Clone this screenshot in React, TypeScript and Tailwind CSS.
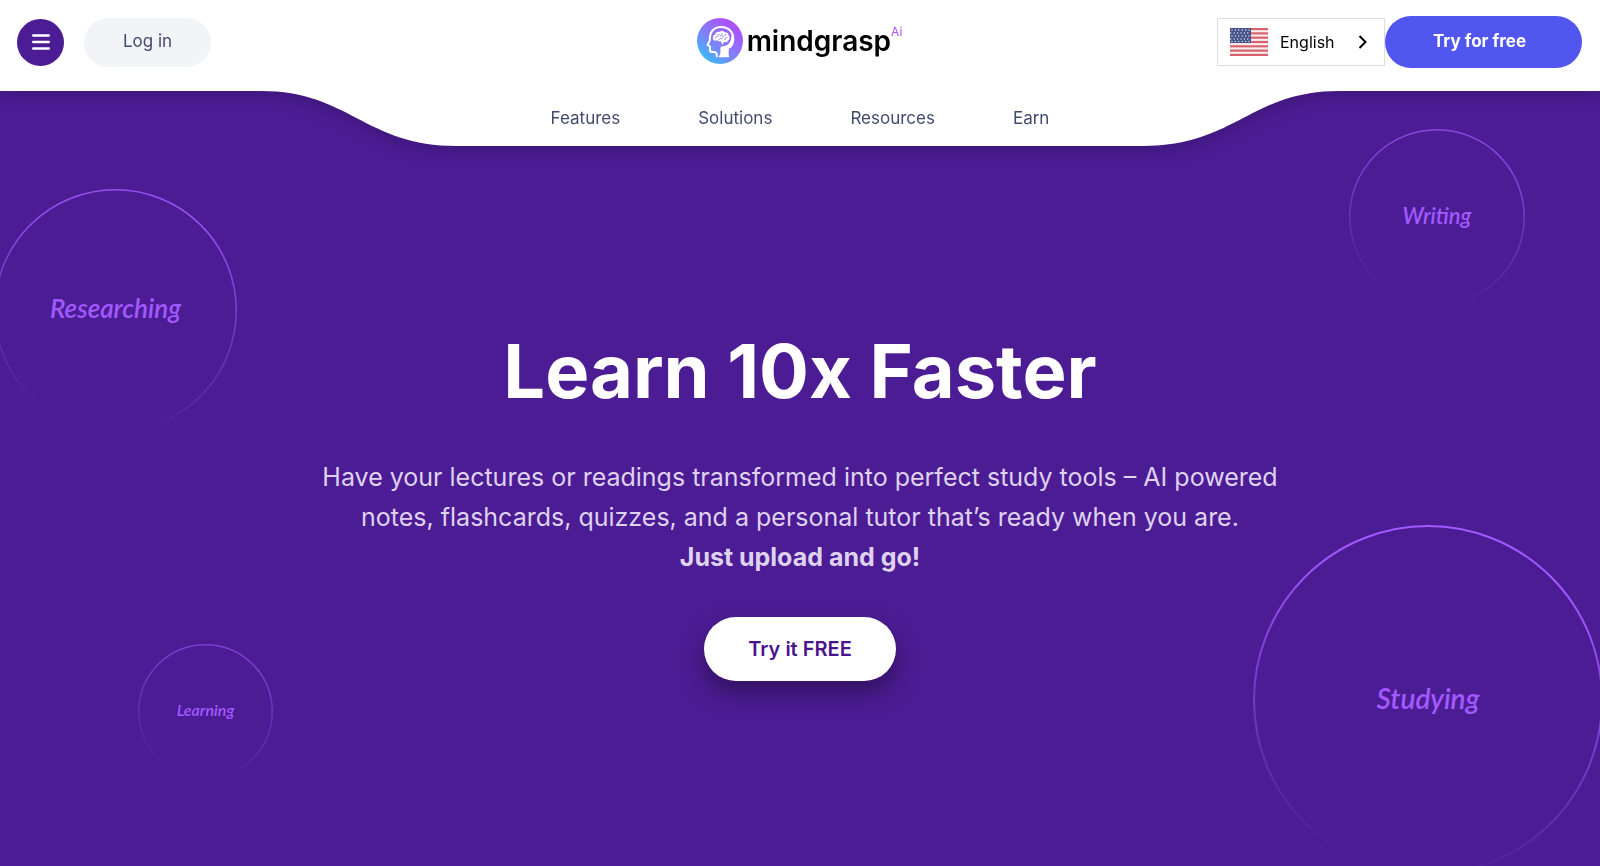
import { useId, useState } from "react";
import { clsx } from "clsx";

interface BubbleProps {
  label: string;
  size: number;
  strokeWidth: number;
  opacity: number;
  className: string;
  textClassName: string;
}

const navItems = ["Features", "Solutions", "Resources", "Earn"];

const stripes = [0, 2, 4, 6, 8, 10, 12];

function Flag() {
  return (
    <svg viewBox="0 0 38 28" className="h-7 w-[38px] shrink-0" aria-hidden="true">
      <rect width="38" height="28" fill="#f6eef0" />
      {stripes.map((row) => (
        <rect key={row} y={(row * 28) / 13} width="38" height={28 / 13} fill="#d8616b" />
      ))}
      <rect width="21" height="15" fill="#46548a" />
      {[2, 5, 8, 11, 13.5].map((y, row) =>
        [2, 5.4, 8.8, 12.2, 15.6, 19].map((x) => (
          <circle key={`${x}-${y}`} cx={row % 2 ? x - 1.2 : x} cy={y} r="0.7" fill="#dfe4f2" />
        ))
      )}
    </svg>
  );
}

function LogoMark() {
  return (
    <svg viewBox="0 0 46 46" className="size-[46px] shrink-0" aria-hidden="true">
      <defs>
        <linearGradient id="logo-fill" x1="0.1" y1="0.95" x2="0.8" y2="0.1">
          <stop offset="0" stopColor="#2fc4fa" />
          <stop offset="0.45" stopColor="#7f82f8" />
          <stop offset="1" stopColor="#b04dfd" />
        </linearGradient>
      </defs>
      <circle cx="23" cy="23" r="23" fill="url(#logo-fill)" />
      {/* head outline */}
      <path
        d="M19.800 38.300c.2-2.800-.6-4.300-2.600-4.300h-2.200c-1.500 0-2-.7-2-2.200v-3.300l-2.500-1.600 2.300-4.500C12.300 14 17 8.900 24 8.900c7.400 0 12.300 5 12.300 12 0 3.300-1.100 5.900-3.200 8.300"
        fill="none"
        stroke="#fff"
        strokeWidth="2"
        strokeLinejoin="round"
        strokeLinecap="round"
      />
      {/* neck */}
      <path
        d="M34.800 14.500c3 5 1.800 10.600-1.600 14-1.900 1.800-1.800 5.500-1.200 10.800H21.200c2-1.900 2.500-4.700 2.200-8-.2-1.700.2-2.500 1.800-2.700 4.600-.6 8.400-3.400 8.900-7.900z"
        fill="#fff"
      />
      {/* brain */}
      <path
        d="M16.300 21.800c-1-2.200-.2-4.400 1.700-5.200.6-2.200 2.600-3.300 4.400-2.700 1.600-1.300 4.200-1.200 5.400.3 2.200-.1 3.800 1.300 3.900 3.300 1.500 1.500 1.200 4-.5 5-.6 1.700-2.600 2.200-4.100 1.300l-1.600 3.200-1.400-3.600c-1.500.5-3 .1-3.600-1.200-1.500.7-3.200.6-4.200-.4z"
        fill="#fff"
      />
      <path
        d="M18.200 20.200c.4-1.600 1.600-2.200 3-1.700M20.700 16.500c1.400-.4 2.500.3 2.700 1.500M24.800 15.600c-.6 1.700.2 2.900 1.800 3M22 21.800c.6-1.600 2.200-2 3.500-1.200M28 21.900c-.4-1.400.4-2.500 1.800-2.500M28.600 16.300l-.6 1.300"
        fill="none"
        stroke="#8a7bfa"
        strokeWidth="0.900"
        strokeLinecap="round"
      />
    </svg>
  );
}

function NotchCurve({ flipped = false }: { flipped?: boolean }) {
  return (
    <svg
      viewBox="0 0 196 55"
      className={clsx("h-[55px] w-[196px] shrink-0", flipped ? "-ml-px -scale-x-100" : "-mr-px")}
      aria-hidden="true"
    >
      <path d="M0 0C88 0 104 55 196 55V0Z" fill="#fff" />
    </svg>
  );
}

function Bubble({ label, size, strokeWidth, opacity, className, textClassName }: BubbleProps) {
  const id = useId();

  return (
    <div className={clsx("absolute flex items-center justify-center pb-1", className)}>
      <svg
        viewBox={`0 0 ${size} ${size}`}
        className="absolute inset-0 size-full"
        aria-hidden="true"
      >
        <defs>
          <linearGradient id={id} x1="0.6" y1="0" x2="0.4" y2="1">
            <stop offset="0.1" stopColor="#a259ff" />
            <stop offset="0.6" stopColor="#a259ff" stopOpacity="0.45" />
            <stop offset="0.98" stopColor="#a259ff" stopOpacity="0" />
          </linearGradient>
        </defs>
        <circle
          cx={size / 2}
          cy={size / 2}
          r={(size - strokeWidth) / 2}
          fill="none"
          stroke={`url(#${id})`}
          strokeWidth={strokeWidth}
          opacity={opacity}
        />
      </svg>
      <span
        className={clsx(
          "relative font-['Lato','Open_Sans',cursive] italic font-semibold text-[#a259ff]",
          textClassName
        )}
      >
        {label}
      </span>
    </div>
  );
}

function Header() {
  const [language, setLanguage] = useState("en");

  return (
    <header className="relative z-10 drop-shadow-[0_4px_8px_rgba(0,0,0,0.2)]">
      <div className="grid h-[91px] grid-cols-[1fr_auto_1fr] items-start bg-white pt-4 pr-[18px] pl-[17px]">
        <div className="flex h-[52px] items-center gap-5">
          <button
            type="button"
            aria-label="Open menu"
            className="flex size-[47px] items-center justify-center rounded-full bg-[#4c1c94] text-white"
          >
            <svg viewBox="0 0 18 16" className="h-4 w-[18px]" aria-hidden="true">
              <path
                d="M1.200 1.500h15.600M1.200 8h15.600M1.200 14.500h15.600"
                stroke="currentColor"
                strokeWidth="2.400"
                strokeLinecap="round"
              />
            </svg>
          </button>
          <a
            href="#login"
            className="flex h-[49px] w-[127px] items-center justify-center rounded-full bg-[#f2f4f8] text-[17px] text-[#414b6e]"
          >
            Log in
          </a>
        </div>

        <a href="#home" className="flex h-[50px] items-center gap-1" aria-label="Mindgrasp AI">
          <LogoMark />
          <span className="text-[28px] leading-8 font-semibold text-black">mindgrasp</span>
          <sup className="-ml-1 self-start pt-4 text-xs leading-none text-[#b04dfd]">Ai</sup>
        </a>

        <div className="flex h-[52px] items-center justify-end">
          <div className="flex h-12 w-[168px] items-center border border-[#dedede] pl-3 text-black">
            <Flag />
            <select
              aria-label="Language"
              value={language}
              onChange={(e) => setLanguage(e.target.value)}
              className="ml-3 w-[76px] appearance-none bg-transparent text-base outline-none"
            >
              <option value="en">English</option>
            </select>
            <svg viewBox="0 0 9 14" className="ml-0.5 h-[14px] w-[9px]" aria-hidden="true">
              <path d="M1.500 1l6 6-6 6" fill="none" stroke="currentColor" strokeWidth="2" />
            </svg>
          </div>
          <a
            href="#signup"
            className="flex h-[52px] w-[197px] items-center justify-center rounded-full bg-[#5056ee] pr-2 text-[17px] font-bold text-white"
          >
            Try for free
          </a>
        </div>
      </div>

      <div className="flex justify-center">
        <NotchCurve />
        <nav className="flex h-[55px] w-[43%] justify-center gap-[78px] bg-white pt-[15px] text-[17px] leading-6 text-[#414b6e]">
          {navItems.map((item) => (
            <a key={item} href={`#${item.toLowerCase()}`}>
              {item}
            </a>
          ))}
        </nav>
        <NotchCurve flipped />
      </div>
    </header>
  );
}

export default function App() {
  return (
    <div className="relative min-h-screen overflow-hidden bg-[#4c1c94] font-['Inter',sans-serif]">
      <Header />

      <Bubble
        label="Researching"
        size={243}
        strokeWidth={1.5}
        opacity={0.85}
        className="top-[189px] -left-[6px] size-[243px]"
        textClassName="text-[26px]"
      />
      <Bubble
        label="Writing"
        size={176}
        strokeWidth={1.5}
        opacity={0.7}
        className="top-[129px] right-[75px] size-[176px]"
        textClassName="text-[22px]"
      />
      <Bubble
        label="Learning"
        size={135}
        strokeWidth={1.5}
        opacity={0.55}
        className="top-[644px] left-[138px] size-[135px]"
        textClassName="text-base"
      />
      <Bubble
        label="Studying"
        size={350}
        strokeWidth={2}
        opacity={1}
        className="top-[525px] -right-[3px] size-[350px]"
        textClassName="text-[28px]"
      />

      <main className="relative flex flex-col items-center px-6 pt-[179px] pb-20 text-center">
        <h1 className="text-[74px] leading-[92px] font-bold text-white">Learn 10x Faster</h1>
        <p className="mt-10 max-w-[980px] text-[25px] leading-10 text-[#dfd2f0]">
          Have your lectures or readings transformed into perfect study tools – AI powered notes,
          flashcards, quizzes, and a personal tutor that’s ready when you are.
          <br />
          <strong className="font-bold">Just upload and go!</strong>
        </p>
        <a
          href="#try"
          className="mt-10 flex h-16 w-[192px] items-center justify-center rounded-full bg-white text-xl font-semibold text-[#4a148c] shadow-[0_12px_24px_rgba(0,0,0,0.35)]"
        >
          Try it FREE
        </a>
      </main>
    </div>
  );
}
